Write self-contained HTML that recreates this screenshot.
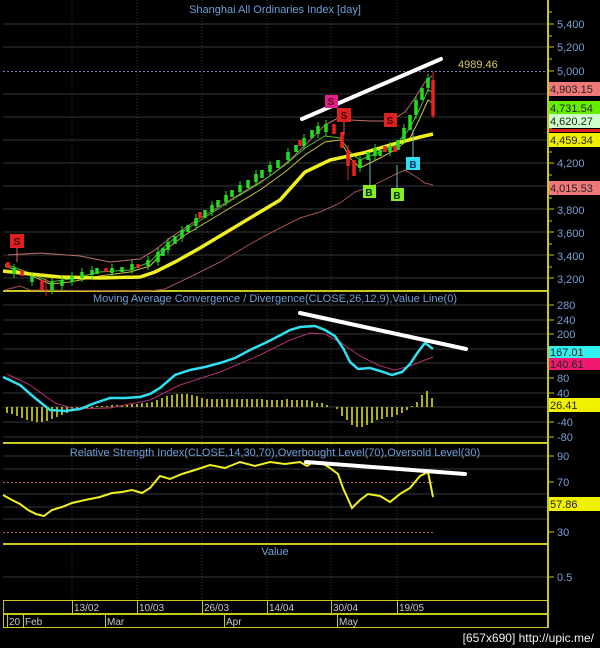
<!DOCTYPE html>
<html><head><meta charset="utf-8"><style>
html,body{margin:0;padding:0;background:#000;}
svg{display:block;}
text{font-family:"Liberation Sans",sans-serif;}
</style></head><body>
<svg width="600" height="648" viewBox="0 0 600 648" xmlns="http://www.w3.org/2000/svg">
<rect width="600" height="648" fill="#000"/>
<g stroke="#363636" stroke-width="1">
<path d="M3 24H548M3 47H548M3 94H548M3 117H548M3 140H548M3 163H548M3 186H548M3 209H548M3 232H548M3 255H548M3 278H548"/>
<path d="M3 305H548M3 320H548M3 334H548M3 349H548M3 363H548M3 378H548M3 393H548M3 407H548M3 422H548M3 437H548"/>
<path d="M3 456H548M3 469H548M3 494H548M3 507H548M3 519H548"/>
<path d="M3 577H548"/>
</g>
<g stroke="#3a3a3a" stroke-width="1" stroke-dasharray="1,2">
<path d="M72 0V600M137 0V600M202 0V600M267 0V600M331 0V600M397 0V600"/>
</g>
<path d="M3 71.5H548" stroke="#8080b0" stroke-dasharray="2,2"/>
<text x="458" y="68" font-size="11" fill="#d8c860">4989.46</text>
<g stroke="#c8c820" stroke-width="2" fill="none">
<path d="M3 291H548M3 443H548M3 544H548"/>
<path d="M548 0V628"/>
</g>
<text x="275" y="13" font-size="11" fill="#6f9fd8" text-anchor="middle">Shanghai All Ordinaries Index [day]</text>
<text x="275" y="302" font-size="11" fill="#6f9fd8" text-anchor="middle">Moving Average Convergence / Divergence(CLOSE,26,12,9),Value Line(0)</text>
<text x="275" y="456" font-size="11" fill="#6f9fd8" text-anchor="middle">Relative Strength Index(CLOSE,14,30,70),Overbought Level(70),Oversold Level(30)</text>
<text x="275" y="555" font-size="11" fill="#6f9fd8" text-anchor="middle">Value</text>

<polyline fill="none" stroke="#c07070" stroke-width="1" points="8,255 40,253 80,256 110,262 140,259 155,250 170,238 200,218 240,194 270,176 290,160 310,140 325,125 338,118 350,120 370,121 390,121 405,112 415,98 425,82 432,76"/>
<polyline fill="none" stroke="#a05050" stroke-width="1" points="5,290 20,286 30,290 150,291 165,289 190,277 220,262 250,244 280,228 300,218 320,212 340,203 355,192 370,187 390,177 405,170 418,178 425,183 433,185"/>
<polyline fill="none" stroke="#c8c040" stroke-width="1" points="5,266 30,275 50,284 70,282 100,276 130,272 150,266 165,250 185,235 210,220 235,205 260,190 285,172 305,155 325,142 340,140 350,158 360,168 380,158 395,150 410,138 420,118 428,100 433,103"/>
<polyline fill="none" stroke="#50c030" stroke-width="1" points="5,264 30,273 50,282 70,279 100,272 130,270 150,262 165,246 185,230 210,214 235,198 260,183 285,165 305,148 325,136 340,138 350,152 360,160 380,152 395,146 410,128 420,108 428,90 433,92"/>
<polyline fill="none" stroke="#f0f020" stroke-width="3.5" points="3,271 30,274 60,277 100,278 140,277 155,272 175,262 200,248 230,230 260,212 280,200 305,172 330,160 363,153 397,143 420,137 433,134"/>
<path fill="none" stroke="#22dd22" stroke-width="1" d="M14 264V278M32 272V286M52 278V294M62 276V290M72 272V286M82 268V282M92 266V279M112 264V277M132 260V274M148 256V270M158 248V266M168 238V254M182 226V242M196 214V230M212 201V216M226 191V206M240 181V196M256 170V186M270 161V176M288 148V164M304 134V150M318 122V138M326 120V136M360 156V172M375 144V160M390 142V156M404 124V144M416 96V119M428 74V92"/>
<path fill="none" stroke="#22dd22" stroke-width="3.5" d="M14 268V274M32 276V282M52 282V290M62 280V286M72 276V282M82 272V278M92 270V275M97 268V274M112 268V273M122 267V272M132 264V270M148 260V266M158 252V262M163 248V256M168 242V250M175 236V244M182 230V238M188 225V232M196 218V226M205 210V218M212 205V212M218 200V207M226 195V202M232 190V197M240 185V192M248 180V188M256 174V182M262 170V178M270 165V172M278 160V168M288 152V160M296 145V152M304 138V146M312 130V138M318 126V134M326 124V132M360 160V168M368 152V160M375 148V156M380 150V156M390 146V152M398 140V150M404 128V140M410 115V130M416 100V115M422 88V100M428 78V88"/>
<path fill="none" stroke="#ee2020" stroke-width="3.5" d="M8 262V268M22 270V276M42 280V290M106 268V272M138 264V268M200 212V218M300 140V146M334 124V134M342 132V148M348 150V166M354 160V176M385 146V152M395 146V152M433 80V116"/>
<path fill="none" stroke="#ee2020" stroke-width="1" d="M433 72V118M348 145V180M46 278V296"/>
<path d="M302 119L441 59" stroke="#fff" stroke-width="4" stroke-linecap="round"/>
<g font-size="10" font-weight="bold" text-anchor="middle">
<rect x="10" y="234" width="14" height="14" fill="#e02020"/><text x="17" y="245" fill="#400">S</text>
<path d="M17 248V262" stroke="#e06060"/>
<rect x="325" y="95" width="13" height="13" fill="#e0208a"/><text x="331" y="105" fill="#600">S</text>
<rect x="337" y="108" width="14" height="14" fill="#e02020"/><text x="344" y="119" fill="#400">S</text>
<path d="M344 122V135" stroke="#e06060"/>
<rect x="384" y="113" width="13" height="14" fill="#e02020"/><text x="390" y="124" fill="#400">S</text>
<path d="M370 158V185M397 165V188M413 130V157" stroke="#60c0c0"/>
<rect x="363" y="185" width="13" height="13" fill="#88ee22"/><text x="369" y="196" fill="#030">B</text>
<rect x="391" y="188" width="13" height="13" fill="#88ee22"/><text x="397" y="199" fill="#030">B</text>
<rect x="406" y="157" width="14" height="13" fill="#30e0f0"/><text x="413" y="168" fill="#036">B</text>
</g>

<path fill="none" stroke="#e8e820" stroke-width="1.5" d="M7 407V413M12 407V414M17 407V416M22 407V418M27 407V420M32 407V421M37 407V422M42 407V422M47 407V421M52 407V419M57 407V417M62 407V415M67 407V413M72 407V411M77 407V410M82 407V409M87 407V409M92 407V408M97 407V406M102 407V406M107 407V406M112 407V405M117 407V405M122 407V405M127 407V404M132 407V404M137 407V404M142 407V403M147 407V403M152 407V402M157 407V400M162 407V398M167 407V396M172 407V395M177 407V394M182 407V394M187 407V394M192 407V395M197 407V396M202 407V398M207 407V399M212 407V399M217 407V399M222 407V399M227 407V399M232 407V399M237 407V399M242 407V399M247 407V399M252 407V399M257 407V399M262 407V399M267 407V400M272 407V400M277 407V400M282 407V400M287 407V399M292 407V400M297 407V400M302 407V400M307 407V400M312 407V401M317 407V403M322 407V403M327 407V405M332 407V407M337 407V409M342 407V416M347 407V420M352 407V425M357 407V427M362 407V427M367 407V425M372 407V423M377 407V420M382 407V419M387 407V417M392 407V417M397 407V415M402 407V413M407 407V410M412 407V406M417 407V402M422 407V395M427 407V391M432 407V398"/>
<polyline fill="none" stroke="#b03070" stroke-width="1" points="7,374 30,385 55,403 75,409 110,408 150,400 180,385 220,372 260,355 290,340 310,333 325,334 340,342 360,356 380,366 395,370 410,366 425,360 433,357"/>
<polyline fill="none" stroke="#30e0f0" stroke-width="2.5" points="3,377 20,385 35,398 50,410 65,411 80,409 95,403 110,398 125,398 140,397 150,394 160,388 175,375 190,370 205,367 220,363 235,358 250,350 265,343 275,338 290,330 300,327 315,326 325,330 335,336 343,348 350,362 358,369 370,368 380,371 392,375 402,372 410,364 418,352 425,343 433,349"/>
<path d="M300 313L466 349" stroke="#fff" stroke-width="4" stroke-linecap="round"/>

<path d="M3 482.5H435M3 532.5H435" stroke="#b06060" stroke-dasharray="2,2"/>
<polyline fill="none" stroke="#f0f020" stroke-width="2" points="3,495 12,500 20,504 28,510 36,514 44,516 52,510 62,507 72,503 85,500 100,497 112,493 122,492 132,490 142,493 150,488 160,476 170,479 182,474 195,470 210,465 225,468 240,462 255,466 270,462 285,464 300,462 307,466 313,462 322,463 330,468 338,474 343,488 352,508 360,500 368,494 380,496 390,502 400,494 410,488 420,476 428,472 433,497"/>
<path d="M306 462L465 474" stroke="#fff" stroke-width="4" stroke-linecap="round"/>

<g stroke="#c8c820" stroke-width="1">
<path d="M548 12H552M548 24H554M548 36H552M548 47H554M548 59H552M548 71H554M548 83H552M548 94H554M548 106H552M548 117H554M548 129H552M548 140H554M548 152H552M548 163H554M548 175H552M548 186H554M548 198H552M548 209H554M548 221H552M548 232H554M548 244H552M548 255H554M548 267H552M548 278H554"/>
<path d="M548 305H554M548 320H554M548 334H554M548 349H554M548 363H554M548 378H554M548 393H554M548 407H554M548 422H554M548 437H554M548 456H554M548 482H554M548 507H554M548 532H554M548 577H554"/>
</g>
<g font-size="11" fill="#7aa0d0">
<text x="557" y="28">5,400</text><text x="557" y="51">5,200</text><text x="557" y="75">5,000</text>
<text x="557" y="167">4,200</text><text x="557" y="214">3,800</text><text x="557" y="237">3,600</text><text x="557" y="260">3,400</text><text x="557" y="283">3,200</text>
<text x="557" y="309">280</text><text x="557" y="324">240</text><text x="557" y="338">200</text><text x="557" y="382">80</text><text x="557" y="397">40</text><text x="557" y="426">-40</text><text x="557" y="441">-80</text>
<text x="557" y="460">90</text><text x="557" y="486">70</text><text x="557" y="536">30</text><text x="557" y="581">0.5</text>
</g>
<g font-size="11" fill="#222">
<rect x="549" y="82" width="51" height="14" fill="#f07878"/><text x="550" y="93">4,903.15</text>
<rect x="549" y="101" width="51" height="13" fill="#66ee00"/><text x="550" y="112">4,731.54</text>
<rect x="549" y="114" width="51" height="14" fill="#ccffcc"/><text x="550" y="125">4,620.27</text>
<rect x="549" y="129" width="51" height="3" fill="#e02020"/>
<rect x="549" y="133" width="51" height="14" fill="#f0f000"/><text x="550" y="144">4,459.34</text>
<rect x="549" y="181" width="51" height="14" fill="#f07878"/><text x="550" y="192">4,015.53</text>
<rect x="549" y="346" width="51" height="12" fill="#30f0f0"/><text x="550" y="356">167.01</text>
<rect x="549" y="358" width="51" height="12" fill="#f01870"/><text x="550" y="368">140.61</text>
<rect x="549" y="398" width="51" height="14" fill="#f0f000"/><text x="550" y="409">26.41</text>
<rect x="549" y="497" width="51" height="14" fill="#f0f000"/><text x="550" y="508">57.86</text>
</g>

<g fill="none" stroke="#c8c820" stroke-width="1">
<rect x="3.5" y="600.5" width="545" height="13"/>
<rect x="3.5" y="614.5" width="545" height="13"/>
<path d="M72.5 600V614M137.5 600V614M202.5 600V614M267.5 600V614M331.5 600V614M397.5 600V614"/>
<path d="M7.5 614V628M23.5 614V628M105.5 614V628M224.5 614V628M337.5 614V628"/>
</g>
<g font-size="10" fill="#c8c8c8">
<text x="74" y="611">13/02</text><text x="139" y="611">10/03</text><text x="204" y="611">26/03</text><text x="269" y="611">14/04</text><text x="333" y="611">30/04</text><text x="399" y="611">19/05</text>
<text x="9" y="625">20</text><text x="25" y="625">Feb</text><text x="107" y="625">Mar</text><text x="226" y="625">Apr</text><text x="339" y="625">May</text>
</g>
<text x="594" y="642" font-size="12" fill="#f0f0f0" text-anchor="end">[657x690] http://upic.me/</text>
</svg>
</body></html>
